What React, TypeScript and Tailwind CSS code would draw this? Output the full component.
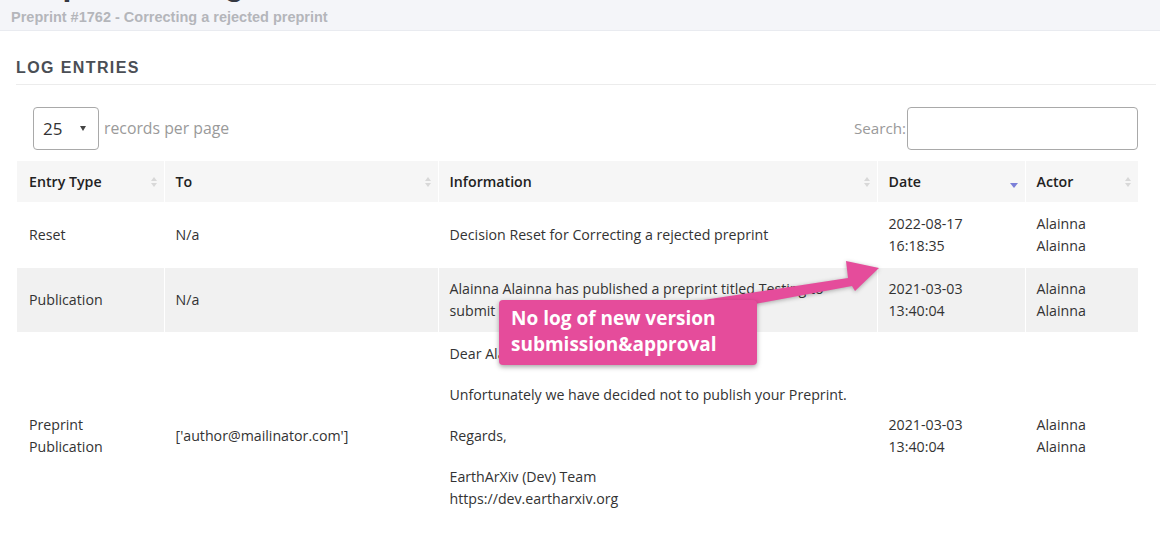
const body = "font-['Open_Sans',_'Liberation_Sans',_sans-serif]";

function SortBoth() {
  return (
    <span className="flex flex-col items-center gap-[2px]">
      <span className="h-0 w-0 border-x-[3.5px] border-b-[4px] border-x-transparent border-b-[#d8d8d8]" />
      <span className="h-0 w-0 border-x-[3.5px] border-t-[4px] border-x-transparent border-t-[#d8d8d8]" />
    </span>
  );
}

function SortDesc() {
  return <span className="mt-[8px] h-0 w-0 border-x-[4px] border-t-[5px] border-x-transparent border-t-[#7b7fd8]" />;
}

const columns = [
  { label: 'Entry Type', width: 'w-[147px]', sort: 'both' },
  { label: 'To', width: 'w-[274px]', sort: 'both' },
  { label: 'Information', width: 'w-[439px]', sort: 'both' },
  { label: 'Date', width: 'w-[148px]', sort: 'desc' },
  { label: 'Actor', width: 'w-[113px]', sort: 'both' },
];

export default function App() {
  return (
    <div className={`relative min-h-screen overflow-hidden bg-white ${body}`}>
      {/* page title band */}
      <div className="border-b border-[#e9ebf0] bg-[#f4f5f9] px-[11px] pb-[3px] font-['Liberation_Sans',_Arial,_sans-serif]">
        <h1 className="-mt-[32px] text-[32px] font-bold leading-[32px] text-[#353841]">Preprint Management</h1>
        <p className="mt-[7px] text-[14.5px] font-bold leading-[20px] text-[#b4b6bb]">
          Preprint #1762 - Correcting a rejected preprint
        </p>
      </div>

      <section className="pl-[16px] pr-[4px]">
        <h2 className="mt-[27px] border-b border-[#ececec] pb-[6px] font-['Liberation_Sans',_Arial,_sans-serif] text-[16px] font-bold leading-[20px] tracking-[1.4px] text-[#4a4e55]">
          LOG ENTRIES
        </h2>

        <div className="pr-[18px]">
          <div className="mt-[22px] flex items-center justify-between">
            <div className="ml-[17px] flex items-center">
              <div className="flex h-[43px] w-[66px] items-center justify-between rounded-[4px] border border-[#a9a9a9] pl-[9px] pr-[12px] text-[17px] text-[#333]">
                <span>25</span>
                <span className="h-0 w-0 border-x-[3.5px] border-t-[5px] border-x-transparent border-t-[#444]" />
              </div>
              <span className="ml-[5px] text-[15.8px] text-[#9a9a9a]">records per page</span>
            </div>
            <label className="flex items-center text-[15.2px] text-[#9a9a9a]">
              Search:
              <span className="ml-px block h-[43px] w-[231px] rounded-[4px] border border-[#a9a9a9]" />
            </label>
          </div>

          <table className="ml-px mt-[11px] w-[1121px] table-fixed border-collapse text-[14.2px] leading-[22px] text-[#333]">
            <thead>
              <tr className="bg-[#f6f6f6]">
                {columns.map((c, i) => (
                  <th
                    key={c.label}
                    className={`${c.width} h-[41px] p-0 text-left font-semibold text-[#222] ${i > 0 ? 'border-l border-white' : ''}`}
                  >
                    <div className={`flex items-center justify-between pr-[7px] ${i > 0 ? 'pl-[11px]' : 'pl-[12px]'}`}>
                      <span>{c.label}</span>
                      {c.sort === 'both' ? <SortBoth /> : <SortDesc />}
                    </div>
                  </th>
                ))}
              </tr>
            </thead>
            <tbody>
              <tr>
                <td className="py-[11px] pl-[12px]">Reset</td>
                <td className="border-l border-white py-[11px] pl-[11px]">N/a</td>
                <td className="border-l border-white py-[11px] pl-[11px]">Decision Reset for Correcting a rejected preprint</td>
                <td className="border-l border-white py-[11px] pl-[11px]">
                  2022-08-17
                  <br />
                  16:18:35
                </td>
                <td className="border-l border-white py-[11px] pl-[11px]">
                  Alainna
                  <br />
                  Alainna
                </td>
              </tr>
              <tr className="bg-[#f1f1f1]">
                <td className="py-[10px] pl-[12px]">Publication</td>
                <td className="border-l border-white py-[10px] pl-[11px]">N/a</td>
                <td className="border-l border-white py-[10px] pl-[11px] pr-[10px]">
                  Alainna Alainna has published a preprint titled Testing to submit a new version of a preprint.
                </td>
                <td className="border-l border-white py-[10px] pl-[11px]">
                  2021-03-03
                  <br />
                  13:40:04
                </td>
                <td className="border-l border-white py-[10px] pl-[11px]">
                  Alainna
                  <br />
                  Alainna
                </td>
              </tr>
              <tr>
                <td className="py-[11px] pl-[12px]">
                  Preprint
                  <br />
                  Publication
                </td>
                <td className="border-l border-white py-[11px] pl-[11px]">['author@mailinator.com']</td>
                <td className="border-l border-white py-[11px] pl-[11px]">
                  <p className="mb-[19px]">Dear Alainna Alainna,</p>
                  <p className="mb-[19px]">Unfortunately we have decided not to publish your Preprint.</p>
                  <p className="mb-[19px]">Regards,</p>
                  <p className="mb-[19px]">
                    EarthArXiv (Dev) Team
                    <br />
                    https://dev.eartharxiv.org
                  </p>
                </td>
                <td className="border-l border-white py-[11px] pl-[11px]">
                  2021-03-03
                  <br />
                  13:40:04
                </td>
                <td className="border-l border-white py-[11px] pl-[11px]">
                  Alainna
                  <br />
                  Alainna
                </td>
              </tr>
            </tbody>
          </table>
        </div>
      </section>

      {/* annotation arrow */}
      <svg
        className="pointer-events-none absolute left-[690px] top-[250px] h-[75px] w-[195px] drop-shadow-[0_1px_2px_rgba(0,0,0,0.3)]"
        viewBox="690 250 195 75"
      >
        <polygon
          points="690,302 848,278 846,261 879,268 855,291 852,286 690,316"
          fill="#e54c9b"
        />
      </svg>

      {/* annotation callout */}
      <div className="absolute left-[499px] top-[300px] h-[65px] w-[258px] rounded-[4px] bg-[#e54c9b] pl-[12px] pt-[5px] text-[19px] font-bold leading-[26px] text-white shadow-[0_2px_5px_rgba(0,0,0,0.35)]">
        No log of new version
        <br />
        submission&amp;approval
      </div>
    </div>
  );
}
